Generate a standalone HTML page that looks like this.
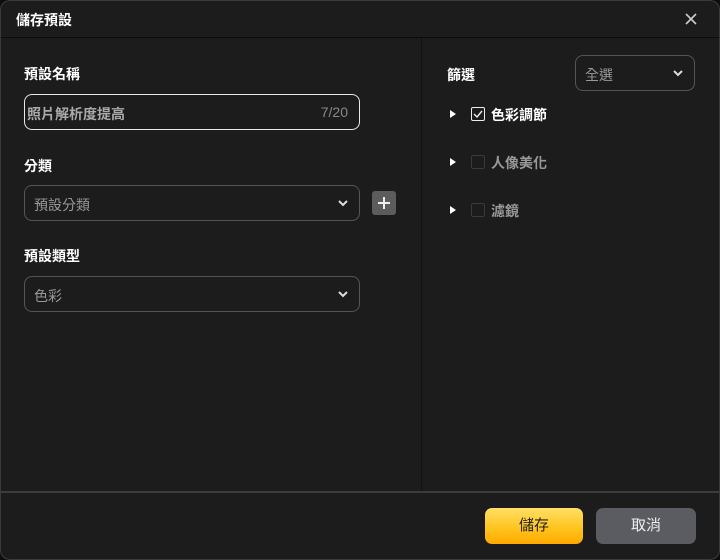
<!DOCTYPE html>
<html><head><meta charset="utf-8"><style>
*{box-sizing:border-box;margin:0;padding:0}
body{width:720px;height:560px;background:#0e0e0e;font-family:"Liberation Sans","Noto Sans CJK TC",sans-serif;overflow:hidden;position:relative}
.win{position:absolute;left:0;top:0;width:720px;height:560px;background:#1c1c1c;box-shadow:inset 0 0 0 1px #3a3a3a;border-radius:10px;overflow:hidden}
.hd{position:absolute;left:1px;top:1px;width:718px;height:37px;border-bottom:1px solid #0c0c0c;background:#1c1c1c;border-radius:10px 10px 0 0}
.title{position:absolute;left:15px;top:9px;color:#fff;font-size:14px;font-weight:bold}
.vd{position:absolute;left:421px;top:38px;width:1px;height:454px;background:#111}
.ft{position:absolute;left:0;top:491px;width:720px;height:2px;background:#3c3c3c}
.lbl{position:absolute;color:#fff;font-size:14px;font-weight:bold}
.box{position:absolute;border:1px solid #555;border-radius:8px;color:#999;font-size:14px}
.chev{position:absolute;right:9px;top:10px}
.item{position:absolute;left:450px;font-size:14px;font-weight:bold}
.tri{position:absolute;left:0;top:3px;width:0;height:0;border-left:6px solid #fff;border-top:4.5px solid transparent;border-bottom:4.5px solid transparent}
.cb{position:absolute;left:21px;top:0;width:14px;height:14px;border:1px solid #3a3a3a;border-radius:2px}
.btn{position:absolute;top:508px;height:36px;border-radius:7px;font-size:15px;text-align:center;line-height:36px}
</style></head><body>
<div class="win">
<div class="hd"><div class="title">儲存預設</div>
<svg style="position:absolute;left:684px;top:12px" width="12" height="12"><path d="M1 1L11 11M11 1L1 11" stroke="#ccc" stroke-width="1.6"/></svg></div>
<div class="vd"></div>
<div class="lbl" style="left:24px;top:64px">預設名稱</div>
<div class="box" style="left:24px;top:94px;width:336px;height:36px;border:1.5px solid #e8e8e8;color:#aaa;font-weight:bold"><span style="position:absolute;left:2px;top:9px">照片解析度提高</span><span style="position:absolute;right:11px;top:9px;font-weight:normal;color:#888">7/20</span></div>
<div class="lbl" style="left:24px;top:156px">分類</div>
<div class="box" style="left:24px;top:185px;width:336px;height:36px"><span style="position:absolute;left:9px;top:9px">預設分類</span><svg class="chev" width="14" height="14"><path d="M3 5L7 9L11 5" stroke="#ddd" stroke-width="2" fill="none"/></svg></div>
<div style="position:absolute;left:372px;top:191px;width:24px;height:24px;background:#5c5c5c;border-radius:3px"><svg width="24" height="24"><path d="M12 6V18M6 12H18" stroke="#eee" stroke-width="2"/></svg></div>
<div class="lbl" style="left:24px;top:246px">預設類型</div>
<div class="box" style="left:24px;top:276px;width:336px;height:36px"><span style="position:absolute;left:9px;top:9px">色彩</span><svg class="chev" width="14" height="14"><path d="M3 5L7 9L11 5" stroke="#ddd" stroke-width="2" fill="none"/></svg></div>
<div class="lbl" style="left:447px;top:65px">篩選</div>
<div class="box" style="left:575px;top:55px;width:120px;height:36px"><span style="position:absolute;left:9px;top:9px">全選</span><svg class="chev" width="14" height="14"><path d="M3 5L7 9L11 5" stroke="#ddd" stroke-width="2" fill="none"/></svg></div>
<div class="item" style="top:107px;color:#fff"><div class="tri"></div><div class="cb" style="border-color:#eee"><svg width="12" height="12" style="position:absolute;left:0;top:0"><path d="M2 6L5 9L10 3" stroke="#eee" stroke-width="1.4" fill="none"/></svg></div><span style="position:absolute;left:41px;top:-2px;white-space:nowrap">色彩調節</span></div>
<div class="item" style="top:155px;color:#999"><div class="tri"></div><div class="cb"></div><span style="position:absolute;left:41px;top:-2px;white-space:nowrap">人像美化</span></div>
<div class="item" style="top:203px;color:#999"><div class="tri"></div><div class="cb"></div><span style="position:absolute;left:41px;top:-2px;white-space:nowrap">濾鏡</span></div>
<div class="ft"></div>
<div class="btn" style="left:485px;width:98px;background:linear-gradient(#ffe066,#ffc21a 60%,#ffaa00);color:#222">儲存</div>
<div class="btn" style="left:596px;width:100px;background:#5b5c62;color:#eee">取消</div>
</div>
</body></html>
